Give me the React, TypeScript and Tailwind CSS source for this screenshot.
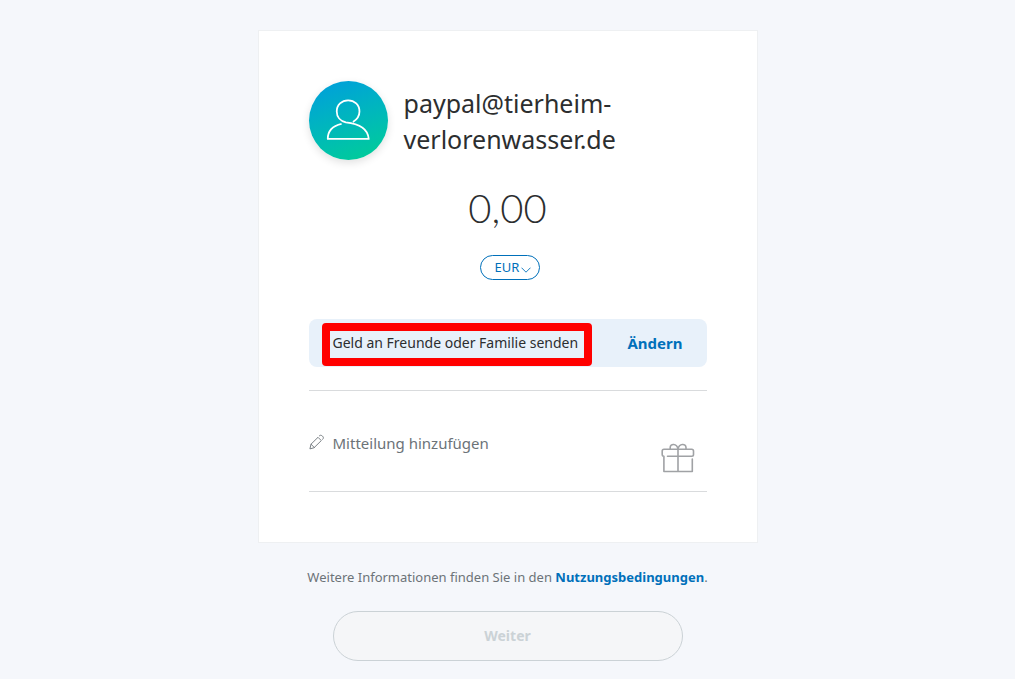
import { useState } from "react";

function PersonIcon() {
  return (
    <svg viewBox="0 0 80 80" className="h-[79px] w-[79px]" fill="none" stroke="#fff" strokeWidth="1.8" strokeLinejoin="round" aria-hidden="true">
      <path d="M44.500 41.500c3.700-2.300 6.600-6 6.600-10.700 0-6.500-5-11.200-11.500-11.200s-11.500 4.700-11.500 11.200c0 5.600 3.700 9.900 9.200 11.100C49 43 59.500 47.500 60.500 58.700H19c0-8 5.500-13.300 14-15.200" />
    </svg>
  );
}

function PencilIcon() {
  return (
    <svg viewBox="0 0 16 16" className="h-4 w-4 shrink-0" fill="none" stroke="#6c7378" strokeWidth="0.9" strokeLinejoin="round" strokeLinecap="round" aria-hidden="true">
      <path d="M1 14.500l1-4.300L9 3.300l3.300 3.300-7 6.900zM2 10.200l3.300 3.300M10.300 2l.5-.5c1.500-1 4.500 1.500 3.300 3.300l-.5.500" />
    </svg>
  );
}

function GiftIcon() {
  return (
    <svg viewBox="0 0 34 30" className="h-[30px] w-[34px]" fill="none" stroke="#a0a2a5" strokeWidth="1.6" strokeLinecap="round" strokeLinejoin="round" aria-hidden="true">
      <path d="M6.500 13.200h24.300c1.200 0 1.700-.6 1.700-1.700V8c0-1.200-.6-1.800-1.800-1.800H3C1.800 6.200 1.200 6.800 1.200 8v3.500c0 1.100.5 1.700 1.700 1.700v15.300H31.300V16M17 6.200v22.300" />
      <path d="M9.200 6V4.500c0-4.200 6.600-4.200 7.800 1.500 1.200-5.700 8-5.700 8-1.500V6" />
    </svg>
  );
}

export default function App() {
  const [amount, setAmount] = useState("0,00");
  const [note, setNote] = useState("");

  return (
    <main className="flex min-h-screen flex-col items-center bg-[#f5f7fb] px-4 pt-[30px] pb-4 font-['Noto_Sans',sans-serif] text-[#2c2e2f]">
      <section className="w-full max-w-[500px] border border-[#eef0f2] bg-white px-[50px] py-[50px]">
        <div className="flex items-center gap-4">
          <div className="shrink-0 rounded-full bg-linear-160 from-[#009cde] to-[#00cf92] shadow-[0_3px_8px_rgba(0,0,0,0.12)]">
            <PersonIcon />
          </div>
          <h1 className="text-[25px] leading-9">
            paypal@tierheim-
            <br />
            verlorenwasser.de
          </h1>
        </div>

        <div className="mt-5 flex flex-col items-center">
          <input
            aria-label="Betrag"
            value={amount}
            onChange={(e) => setAmount(e.target.value)}
            className="h-14 w-full bg-transparent text-center font-['Lato',sans-serif] text-[40px] font-light outline-none"
          />
          <div className="relative mt-[19px] ml-1">
            <select
              aria-label="Währung"
              className="block h-[25px] w-[60px] appearance-none rounded-full border border-[#0070ba] bg-white pl-[14px] text-[13px] text-[#0070ba]"
            >
              <option>EUR</option>
            </select>
            <svg viewBox="0 0 10 6" className="pointer-events-none absolute top-3 right-[9px] h-[6px] w-[10px]" fill="none" stroke="#0070ba" strokeWidth="0.9" aria-hidden="true">
              <path d="M.5.700L5 5.200 9.500.700" />
            </svg>
          </div>
        </div>

        <div className="mt-[39px] flex h-12 items-center justify-between rounded-lg bg-[#e8f1fa] px-6">
          <p className="relative text-sm leading-6">
            Geld an Freunde oder Familie senden
            <span className="absolute -top-2 -right-[14px] -bottom-[11px] -left-[11px] rounded border-8 border-[#ff0000]" />
          </p>
          <button type="button" className="text-[15px] font-bold text-[#0070ba]">
            Ändern
          </button>
        </div>

        <div className="mt-[23px] flex h-[102px] items-start border-y border-[#d9dbdd] pt-10">
          <label htmlFor="note" className="mt-[3px] mr-2">
            <PencilIcon />
          </label>
          <input
            id="note"
            aria-label="Mitteilung hinzufügen"
            value={note}
            onChange={(e) => setNote(e.target.value)}
            placeholder="Mitteilung hinzufügen"
            className="h-6 min-w-0 flex-1 bg-transparent text-[15px] outline-none placeholder:text-[#6c7378]"
          />
          <button type="button" aria-label="Geschenk" className="mt-3 mr-3">
            <GiftIcon />
          </button>
        </div>
      </section>

      <p className="mt-6 text-[13px] leading-5 text-[#6c7378]">
        Weitere Informationen finden Sie in den{" "}
        <a href="#nutzungsbedingungen" className="font-bold text-[#0070ba]">
          Nutzungsbedingungen
        </a>
        .
      </p>

      <button
        type="button"
        disabled
        className="mt-6 h-[50px] w-full max-w-[350px] rounded-full border border-[#cbd2d6] bg-[#f5f6f8] text-sm font-bold text-[#cbd2d6]"
      >
        Weiter
      </button>
    </main>
  );
}
